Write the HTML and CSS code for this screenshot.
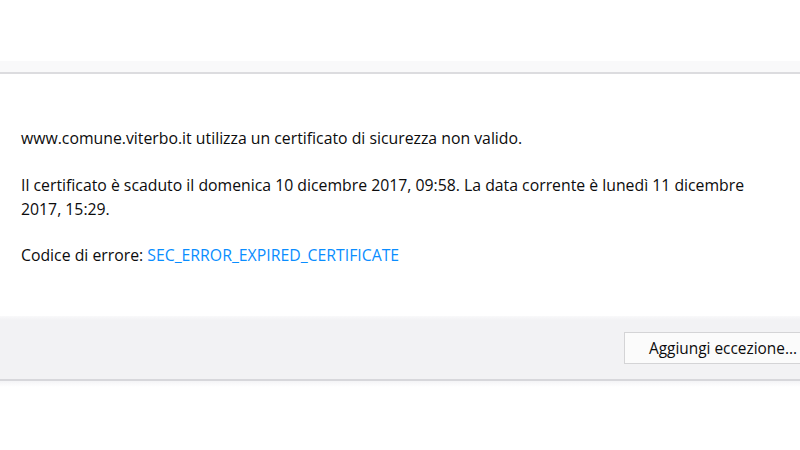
FILE: index.html
```html
<!DOCTYPE html>
<html lang="it">
<head>
<meta charset="utf-8">
<link rel="stylesheet" href="styles.css">
</head>
<body>
<div class="topbar"></div>
<main class="content">
  <p>www.comune.viterbo.it utilizza un certificato di sicurezza non valido.</p>
  <p class="p2">Il certificato è scaduto il domenica 10 dicembre 2017, 09:58. La data corrente è lunedì 11 dicembre 2017, 15:29.</p>
  <p>Codice di errore: <a class="code" href="#">SEC_ERROR_EXPIRED_CERTIFICATE</a></p>
</main>
<div class="actions">
  <button class="btn">Aggiungi eccezione...</button>
</div>
<div class="after"></div>
</body>
</html>
```
FILE: styles.css
```css
html, body {
  margin: 0;
  padding: 0;
  background: #ffffff;
  width: 800px;
  height: 450px;
  overflow: hidden;
}
body {
  font-family: "Open Sans", "Noto Sans", sans-serif;
  color: #0c0c0d;
}
.topbar {
  margin-top: 61px;
  height: 11px;
  background: #f9f9fa;
  border-bottom: 2px solid #dcdcdf;
}
.content {
  padding: 52px 0 0 21px;
  width: 760px;
  height: 190px;
  box-sizing: content-box;
}
.content p {
  margin: 0 0 23px 0;
  font-size: 15.8px;
  line-height: 24px;
}
.content .p2 {
  margin-bottom: 22px;
}
.code {
  color: #0a8dff;
  text-decoration: none;
}
.actions {
  height: 63px;
  background: linear-gradient(#f9f9fa, #f2f2f4 4px, #f2f2f4);
  border-bottom: 2px solid #d7d7db;
  display: flex;
  justify-content: flex-start;
  align-items: flex-start;
  padding-left: 624px;
  box-sizing: content-box;
}
.btn {
  margin-top: 16px;
  height: 32px;
  width: 200px;
  flex: none;
  background: #fbfbfb;
  border: 1px solid #d4d4d6;
  border-right: none;
  border-radius: 0;
  padding: 0 0 0 24px;
  text-align: left;
  font-family: "Open Sans", "Noto Sans", sans-serif;
  font-size: 15.4px;
  color: #0c0c0d;
}
.after {
  height: 6px;
  background: linear-gradient(#f4f4f6, #ffffff);
}
```
